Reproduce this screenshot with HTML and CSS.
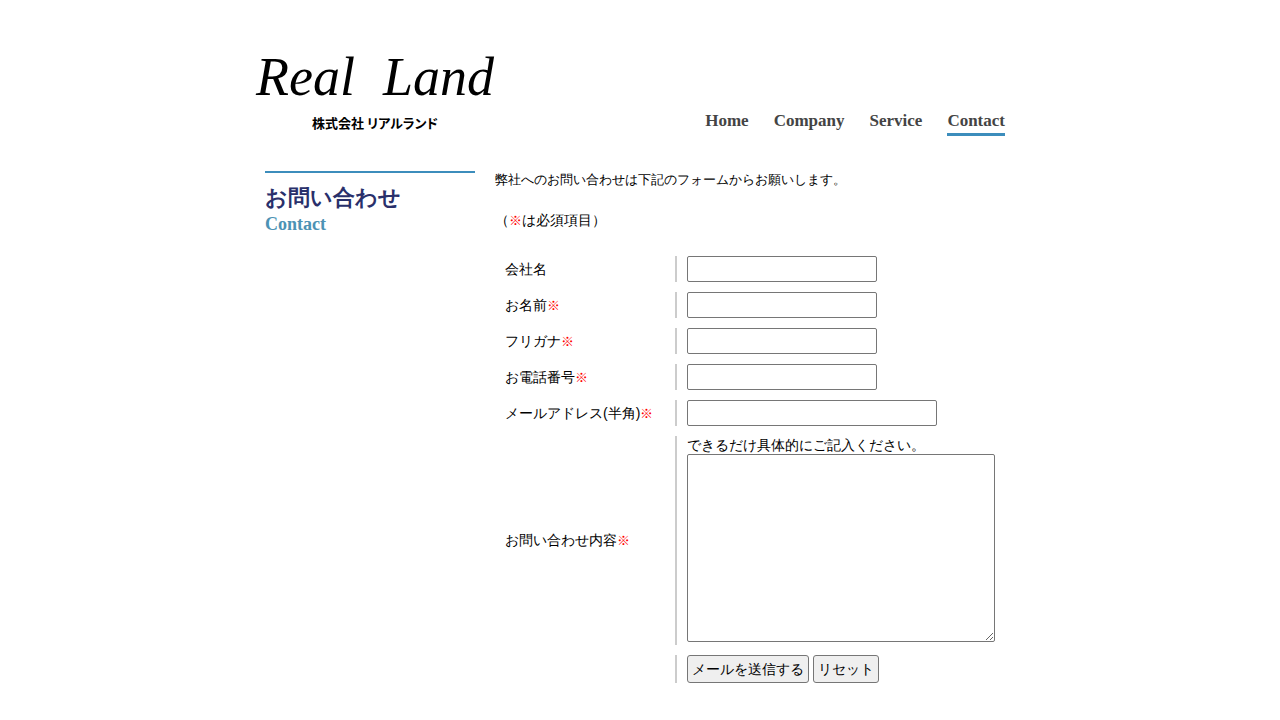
FILE: index.html
```html
<!DOCTYPE html>
<html lang="ja">
<head>
<meta charset="utf-8">
<title>お問い合わせ | 株式会社 リアルランド</title>
<link rel="stylesheet" href="styles.css">
</head>
<body>
<div class="wrapper">
  <header class="header">
    <a class="logo" href="#">
      <span class="logo-name"><span>Real</span><span>Land</span></span>
      <span class="logo-company">株式会社 リアルランド</span>
    </a>
    <nav class="nav">
      <a href="#">Home</a>
      <a href="#">Company</a>
      <a href="#">Service</a>
      <a href="#" class="current">Contact</a>
    </nav>
  </header>
  <div class="columns">
    <aside class="side">
      <h1 class="side-title">お問い合わせ</h1>
      <p class="side-sub">Contact</p>
    </aside>
    <main class="main">
      <p class="lead">弊社へのお問い合わせは下記のフォームからお願いします。</p>
      <p class="note">（<span class="req">※</span>は必須項目）</p>
      <form>
        <table class="form-table">
          <tr><th><label for="company">会社名</label></th><td><input class="field" type="text" id="company"></td></tr>
          <tr><th><label for="name">お名前<span class="req">※</span></label></th><td><input class="field" type="text" id="name"></td></tr>
          <tr><th><label for="kana">フリガナ<span class="req">※</span></label></th><td><input class="field" type="text" id="kana"></td></tr>
          <tr><th><label for="tel">お電話番号<span class="req">※</span></label></th><td><input class="field" type="text" id="tel"></td></tr>
          <tr><th><label for="mail">メールアドレス(半角)<span class="req">※</span></label></th><td><input class="field field-wide" type="text" id="mail"></td></tr>
          <tr><th><label for="body">お問い合わせ内容<span class="req">※</span></label></th><td class="message">できるだけ具体的にご記入ください。<textarea id="body"></textarea></td></tr>
          <tr><th></th><td><div class="buttons"><button type="submit">メールを送信する</button><button type="reset">リセット</button></div></td></tr>
        </table>
      </form>
    </main>
  </div>
</div>
</body>
</html>
```
FILE: styles.css
```css
* { box-sizing: border-box; }
body {
  margin: 0;
  background: #fff;
  color: #000;
  font: 14px/18px "Liberation Sans", sans-serif;
}
h1, p { margin: 0; }
a { color: inherit; text-decoration: none; }
.wrapper {
  max-width: 770px;
  margin: 0 auto;
  padding-top: 40px;
}
.header {
  display: flex;
  justify-content: space-between;
  align-items: flex-end;
  padding-right: 20px;
}
.logo {
  display: flex;
  flex-direction: column;
  align-items: center;
  width: 240px;
  padding-bottom: 4px;
}
.logo-name {
  display: flex;
  gap: 28px;
  font: italic 54px/74px "Liberation Serif", serif;
}
.logo-company {
  font: bold 13px/18px "Noto Sans CJK JP", sans-serif;
  font-feature-settings: "palt";
}
.nav {
  display: flex;
  gap: 25px;
  font: bold 17px/20px "Liberation Serif", serif;
  color: #444;
}
.nav a {
  padding-bottom: 2px;
  border-bottom: 3px solid transparent;
}
.nav .current { border-bottom-color: #3c8dbc; }
.columns {
  display: flex;
  gap: 20px;
  padding: 35px 20px 0 10px;
}
.side {
  flex: 0 0 210px;
  align-self: flex-start;
  padding-top: 10px;
  border-top: 2px solid #3c8dbc;
}
.side-title {
  color: #29306b;
  font-size: 22px;
  line-height: 30px;
}
.side-sub {
  color: #4c92b4;
  font: bold 18px/22px "Liberation Serif", serif;
}
.main { flex: 1; }
.lead { font-size: 13px; }
.note { padding: 22px 0 16px; }
.req { color: #f00; font-size: 13px; }
.form-table {
  width: 100%;
  border-collapse: separate;
  border-spacing: 10px;
}
th, td { padding: 0; text-align: left; font-weight: normal; }
th { width: 160px; }
td { padding-left: 10px; border-left: 2px solid #ccc; }
.field, textarea {
  display: block;
  border: 1px solid #767676;
  border-radius: 2px;
  background: #fff;
  font: inherit;
}
.field { width: 190px; height: 26px; }
.field-wide { width: 250px; }
textarea { width: 100%; height: 188px; }
.message { padding-bottom: 3px; }
.buttons { display: flex; gap: 4px; }
button {
  height: 28px;
  padding: 0 4px;
  border: 1px solid #767676;
  border-radius: 3px;
  background: #efefef;
  color: #000;
  font: inherit;
}
```
